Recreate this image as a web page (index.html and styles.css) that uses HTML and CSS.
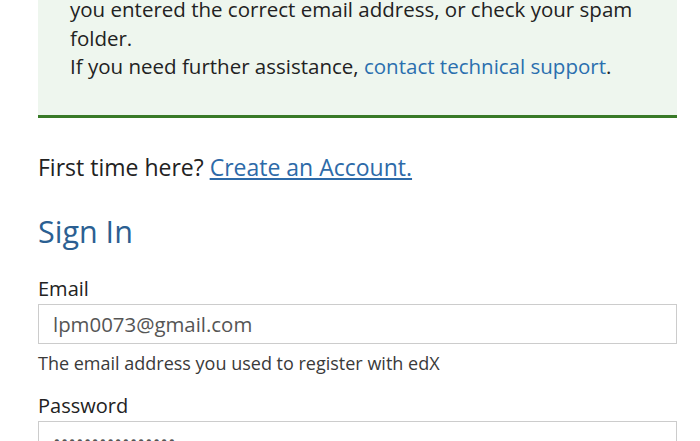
FILE: index.html
```html
<!DOCTYPE html>
<html lang="en">
<head>
<meta charset="utf-8">
<title>Sign In</title>
<link rel="stylesheet" href="styles.css">
</head>
<body>
<main class="page">
  <div class="notice">
    <p>you entered the correct email address, or check your spam folder.</p>
    <p>If you need further assistance, <a href="#" class="notice-link">contact technical support</a>.</p>
  </div>

  <p class="first-time">First time here? <a href="#" class="create-link">Create an Account.</a></p>

  <h2 class="title">Sign In</h2>

  <form class="form">
    <div class="field">
      <label class="label" for="email">Email</label>
      <input class="input" id="email" type="email" value="lpm0073@gmail.com">
      <p class="help">The email address you used to register with edX</p>
    </div>
    <div class="field field-password">
      <label class="label" for="password">Password</label>
      <input class="input" id="password" type="password" value="passwordpassword">
    </div>
  </form>
</main>
</body>
</html>
```

FILE: styles.css
```css
html, body {
  margin: 0;
  padding: 0;
  background: #fff;
  overflow: hidden;
}

body {
  font-family: "Open Sans", "Liberation Sans", sans-serif;
  color: #222;
  font-size: 20px;
  line-height: 28.5px;
}

.page {
  width: 639px;
  margin-left: 38px;
}

.notice {
  margin-top: -25px;
  padding: 20px 10px 34px 32px;
  background: #eef6ee;
  border-bottom: 3px solid #387a27;
  font-size: 20.5px;
}

.notice p {
  margin: 0;
}

.notice-link {
  color: #2a6fae;
  text-decoration: none;
}

.first-time {
  margin: 35px 0 0;
  font-size: 23px;
}

.create-link {
  color: #2d6aa8;
  text-decoration: underline;
  text-underline-offset: 2px;
}

.title {
  margin: 32px 0 0;
  font-size: 30.5px;
  line-height: 36px;
  font-weight: 400;
  color: #2b5f92;
}

.form {
  margin-top: 26px;
}

.field {
  display: flex;
  flex-direction: column;
}

.field + .field {
  margin-top: 16px;
}

.label {
  font-size: 20px;
  line-height: 28.5px;
  margin-bottom: 0;
}

.field-password .label {
  margin-bottom: 1px;
}

.input {
  box-sizing: border-box;
  width: 100%;
  height: 40px;
  margin: 0;
  padding: 0 14px;
  border: 1px solid #cccccc;
  border-radius: 0;
  font-family: "Open Sans", "Liberation Sans", sans-serif;
  font-size: 20.4px;
  color: #555;
  background: #fff;
  outline: none;
}

.help {
  margin: 6px 0 0;
  font-size: 18px;
  line-height: 26px;
  color: #3a3a3a;
}
```
